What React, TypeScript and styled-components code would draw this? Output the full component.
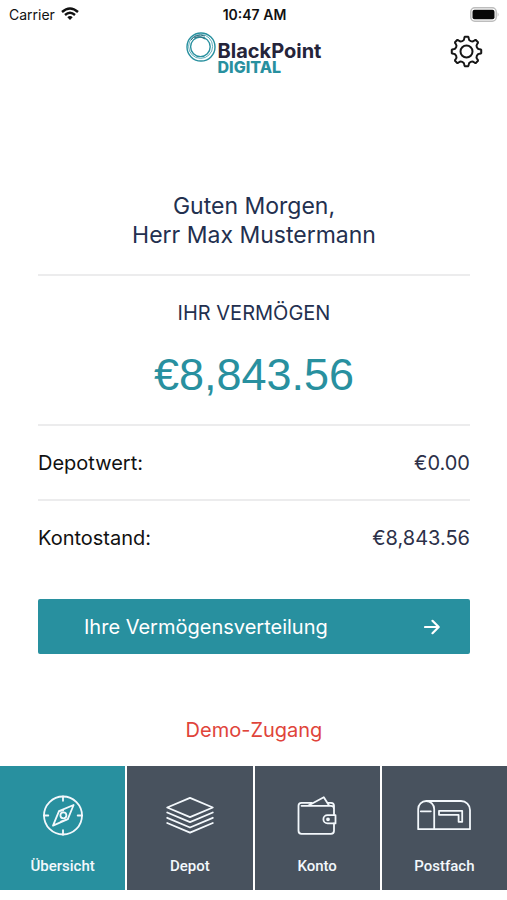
import React from "react";
import styled, { createGlobalStyle } from "styled-components";

const teal = "#28909f";
const slate = "#48525e";
const navy = "#23304f";

const GlobalStyle = createGlobalStyle`
  *, *::before, *::after { box-sizing: border-box; }
  body {
    margin: 0;
    background: #fff;
    color: #111;
    font-family: Inter, "Liberation Sans", sans-serif;
  }
`;

const Screen = styled.div`
  display: flex;
  flex-direction: column;
  min-height: 100vh;
  padding-bottom: 10px;
`;

const StatusBar = styled.div`
  display: grid;
  grid-template-columns: 1fr auto 1fr;
  align-items: center;
  height: 28px;
  padding: 0 7px 0 9px;
  font-size: 14px;
`;

const Carrier = styled.span`
  display: flex;
  align-items: center;
  gap: 6px;
`;

const Clock = styled.time`
  font-weight: 600;
`;

const BatteryIcon = styled.svg`
  justify-self: end;
`;

const Header = styled.header`
  display: grid;
  grid-template-columns: 1fr auto 1fr;
  height: 52px;
  padding: 4px 24px 0;
`;

const Brand = styled.div`
  display: flex;
  grid-column: 2;
  gap: 2px;
`;

const Wordmark = styled.div`
  display: flex;
  flex-direction: column;
  padding-top: 10px;
  font-weight: 700;
`;

const BrandName = styled.span`
  color: #25243a;
  font-size: 20px;
  line-height: 18px;
`;

const BrandSuffix = styled.span`
  color: ${teal};
  font-size: 16px;
  font-weight: 800;
  line-height: 14px;
`;

const IconButton = styled.button`
  align-self: start;
  justify-self: end;
  padding: 3px 0;
  border: 0;
  background: none;
  color: #161616;
  cursor: pointer;

  svg { display: block; }
`;

const Main = styled.main`
  flex: 1;
  padding: 112px 37px 0 38px;
`;

const Greeting = styled.h1`
  margin: 0;
  padding-bottom: 24px;
  color: ${navy};
  font-size: 23px;
  font-weight: 400;
  line-height: 29px;
  text-align: center;
`;

const Wealth = styled.section`
  padding: 23px 0 21px;
  border-top: 2px solid #ececed;
  text-align: center;
`;

const WealthTitle = styled.h2`
  margin: 0;
  color: ${navy};
  font-size: 20px;
  font-weight: 400;
  line-height: 28px;
`;

const WealthAmount = styled.p`
  margin: 20px 0 0;
  color: ${teal};
  font-family: "Liberation Sans", Arial, sans-serif;
  font-size: 45px;
  line-height: 56px;
`;

const Balances = styled.dl`
  margin: 0;
`;

const Balance = styled.div`
  display: flex;
  align-items: center;
  justify-content: space-between;
  height: 75px;
  border-top: 2px solid #ececed;
  font-size: 20px;

  dd {
    margin: 0;
    color: #2c3048;
  }
`;

const PrimaryButton = styled.button`
  display: flex;
  align-items: center;
  justify-content: space-between;
  width: 100%;
  height: 55px;
  margin-top: 25px;
  padding: 0 30px 0 46px;
  border: 0;
  border-radius: 2px;
  background: ${teal};
  color: #fff;
  font: 400 20px Inter, "Liberation Sans", sans-serif;
  cursor: pointer;
`;

const DemoNote = styled.p`
  margin: 62px 0 22px;
  color: #e0443a;
  font-size: 20px;
  line-height: 28px;
  text-align: center;
`;

const TabBar = styled.nav`
  display: grid;
  grid-template-columns: repeat(4, 1fr);
  gap: 2px;
`;

const Tab = styled.a<{ $active?: boolean }>`
  display: flex;
  flex-direction: column;
  align-items: center;
  gap: 18px;
  height: 124px;
  padding-top: 26px;
  background: ${(p) => (p.$active ? teal : slate)};
  color: #f3f8fc;
  font: 500 15px/20px Roboto, "Liberation Sans", sans-serif;
  text-decoration: none;
`;

const LineIcon = styled.svg`
  fill: none;
  stroke: currentColor;
  stroke-width: 1.8;
  stroke-linecap: round;
  stroke-linejoin: round;
`;

const gearPath = (() => {
  const at = (deg: number, r: number) => {
    const a = (deg * Math.PI) / 180;
    return `${(16.5 + r * Math.sin(a)).toFixed(2)} ${(16.5 - r * Math.cos(a)).toFixed(2)}`;
  };
  const parts: string[] = [];
  for (let i = 0; i < 8; i++) {
    const d = i * 45;
    parts.push(
      `${i ? "L" : "M"}${at(d - 6, 14.8)}L${at(d + 6, 14.8)}Q${at(d + 9, 14.6)} ${at(d + 10, 13)}`,
      `C${at(d + 13, 10.8)} ${at(d + 32, 10.8)} ${at(d + 35, 13)}Q${at(d + 36, 14.6)} ${at(d + 39, 14.8)}`
    );
  }
  return parts.join("") + "Z";
})();

const WifiIcon = () => (
  <svg width="18" height="14" viewBox="0 0 18 14" fill="none" stroke="#111" strokeWidth="2.4" aria-hidden="true">
    <path d="M1 5Q9-2 17 5M4 8Q9 3.6 14 8" />
    <path d="M6.3 10.2Q9 8 11.7 10.2L9 13Z" fill="#111" stroke="none" />
  </svg>
);

const Battery = () => (
  <BatteryIcon width="30" height="15" viewBox="0 0 30 15" role="img" aria-label="Battery full">
    <rect x="0.8" y="0.8" width="25.4" height="13.4" rx="4" fill="#fff" stroke="#bdbdbd" strokeWidth="1.5" />
    <rect x="2.5" y="2.8" width="22" height="9.4" rx="2" fill="#080808" />
    <path d="M27.6 5.2q2 2.3 0 4.6z" fill="#bdbdbd" />
  </BatteryIcon>
);

const RingsLogo = () => (
  <svg width="30" height="30" viewBox="0 0 30 30" fill="none" stroke={teal} aria-hidden="true">
    <circle cx="15" cy="15" r="14" strokeWidth="1.4" />
    <circle cx="14.6" cy="14.4" r="12" strokeWidth="1" stroke="#62aeba" />
    <circle cx="14.4" cy="14.8" r="9.8" strokeWidth="1.4" />
    <path d="M5 8Q10 1 19 4M8 6Q13 3 19 7" strokeWidth="1" stroke="#326f80" />
  </svg>
);

const CompassIcon = () => (
  <LineIcon width="42" height="46" viewBox="0 0 42 46" aria-hidden="true">
    <circle cx="21" cy="23.5" r="19" />
    <path d="M21 4.3v4.5M21 38.2v4.5M1.8 23.5h4.5M35.7 23.5h4.5M31.6 13l-5.8 14.2L11 33.6 17 19.2z" />
    <path d="M17 19.2l4.5-.5M25.8 27.2l-7 2.2" strokeWidth="1.2" />
    <circle cx="21.4" cy="23.3" r="3" />
  </LineIcon>
);

const LayersIcon = () => (
  <LineIcon width="50" height="46" viewBox="0 0 50 46" strokeWidth="2" aria-hidden="true">
    <path d="M25 5.8l22.8 9.7L25 25.2 2.2 15.5z" />
    <path d="M2.2 20.5L25 30.2l22.8-9.7M2.2 25.8L25 35.5l22.8-9.7M2.2 31L25 40.7 47.8 31" />
  </LineIcon>
);

const WalletIcon = () => (
  <LineIcon width="40" height="46" viewBox="0 0 40 46" aria-hidden="true">
    <path d="M11 13.8L26.8 5.3l5.4 8.5M14.5 10.8h-10a3 3 0 0 0-3 3v25a3 3 0 0 0 3 3H34a3 3 0 0 0 3-3v-7.4M37 23.2v-6.4a3 3 0 0 0-3-3H4.5M31 10.8h3a3 3 0 0 1 3 3V17" />
    <path d="M38.5 23.2h-8a4.1 4.1 0 0 0 0 8.2h8z" />
    <circle cx="31" cy="27.3" r="1" fill="currentColor" />
  </LineIcon>
);

const MailboxIcon = () => (
  <LineIcon width="54" height="46" viewBox="0 0 54 46" aria-hidden="true">
    <path d="M1.2 37.2V17a8 8 0 0 1 8-8H44a9 9 0 0 1 9 9v19.2zM9.2 9a8 8 0 0 1 8 8v20.2M3.8 19.3h10" />
    <path d="M22 18.8h23.2v11h-3.6v-7H22z" />
  </LineIcon>
);

const tabs = [
  { id: "uebersicht", label: "Übersicht", Icon: CompassIcon },
  { id: "depot", label: "Depot", Icon: LayersIcon },
  { id: "konto", label: "Konto", Icon: WalletIcon },
  { id: "postfach", label: "Postfach", Icon: MailboxIcon },
];

const balances = [
  { label: "Depotwert:", value: "€0.00" },
  { label: "Kontostand:", value: "€8,843.56" },
];

export default function App() {
  return (
    <Screen>
      <GlobalStyle />
      <StatusBar>
        <Carrier>
          Carrier
          <WifiIcon />
        </Carrier>
        <Clock>10:47 AM</Clock>
        <Battery />
      </StatusBar>
      <Header>
        <Brand>
          <RingsLogo />
          <Wordmark>
            <BrandName>BlackPoint</BrandName>
            <BrandSuffix>DIGITAL</BrandSuffix>
          </Wordmark>
        </Brand>
        <IconButton type="button" aria-label="Einstellungen">
          <svg width="33" height="33" viewBox="0 0 33 33" fill="none" stroke="currentColor" strokeWidth="2" strokeLinejoin="round">
            <path d={gearPath} />
            <circle cx="16.5" cy="16.5" r="6" />
          </svg>
        </IconButton>
      </Header>
      <Main>
        <Greeting>
          Guten Morgen,
          <br />
          Herr Max Mustermann
        </Greeting>
        <Wealth>
          <WealthTitle>IHR VERMÖGEN</WealthTitle>
          <WealthAmount>€8,843.56</WealthAmount>
        </Wealth>
        <Balances>
          {balances.map((b) => (
            <Balance key={b.label}>
              <dt>{b.label}</dt>
              <dd>{b.value}</dd>
            </Balance>
          ))}
        </Balances>
        <PrimaryButton type="button">
          Ihre Vermögensverteilung
          <LineIcon width="16" height="16" viewBox="0 0 16 16" aria-hidden="true">
            <path d="M1 8h13.5M8.5 1.8L14.7 8l-6.2 6.2" strokeWidth="2.2" />
          </LineIcon>
        </PrimaryButton>
        <DemoNote>Demo-Zugang</DemoNote>
      </Main>
      <TabBar>
        {tabs.map(({ id, label, Icon }, i) => (
          <Tab key={id} href={`#${id}`} $active={i === 0} aria-current={i === 0 ? "page" : undefined}>
            <Icon />
            {label}
          </Tab>
        ))}
      </TabBar>
    </Screen>
  );
}
